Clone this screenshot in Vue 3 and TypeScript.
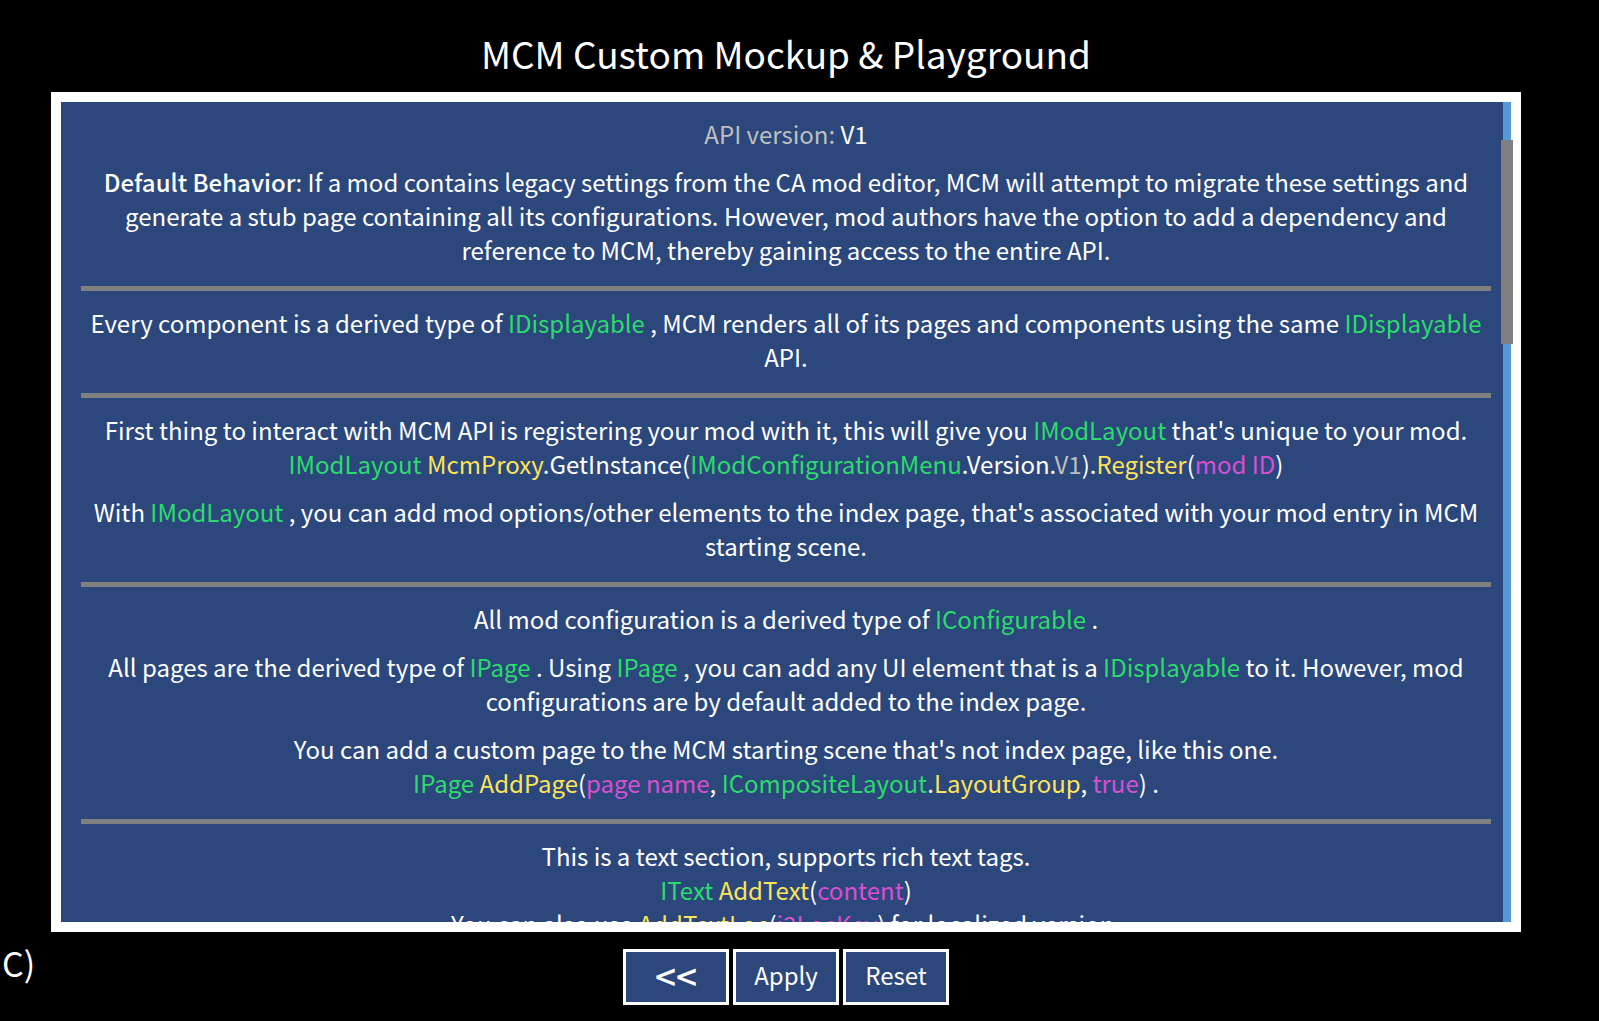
<script setup lang="ts">
import { computed, ref } from 'vue'

type Tone = 'type' | 'member' | 'arg' | 'muted' | 'strong'
type Span = string | [Tone, string]
type Line = Span[]
type Paragraph = Line[]

const sections: Paragraph[][] = [
  [
    [[['muted', 'API version:'], ' V1']],
    [[
      ['strong', 'Default Behavior'],
      ': If a mod contains legacy settings from the CA mod editor, MCM will attempt to migrate these settings and generate a stub page containing all its configurations. However, mod authors have the option to add a dependency and reference to MCM, thereby gaining access to the entire API.',
    ]],
  ],
  [
    [[
      'Every component is a derived type of ', ['type', 'IDisplayable'],
      ' , MCM renders all of its pages and components using the same ', ['type', 'IDisplayable'], ' API.',
    ]],
  ],
  [
    [
      ['First thing to interact with MCM API is registering your mod with it, this will give you ', ['type', 'IModLayout'], " that's unique to your mod."],
      [
        ['type', 'IModLayout'], ' ', ['member', 'McmProxy'], '.GetInstance(', ['type', 'IModConfigurationMenu'],
        '.Version.', ['muted', 'V1'], ').', ['member', 'Register'], '(', ['arg', 'mod ID'], ')',
      ],
    ],
    [[
      'With ', ['type', 'IModLayout'],
      " , you can add mod options/other elements to the index page, that's associated with your mod entry in MCM starting scene.",
    ]],
  ],
  [
    [['All mod configuration is a derived type of ', ['type', 'IConfigurable'], ' .']],
    [[
      'All pages are the derived type of ', ['type', 'IPage'], ' . Using ', ['type', 'IPage'],
      ' , you can add any UI element that is a ', ['type', 'IDisplayable'],
      ' to it. However, mod configurations are by default added to the index page.',
    ]],
    [
      ["You can add a custom page to the MCM starting scene that's not index page, like this one."],
      [
        ['type', 'IPage'], ' ', ['member', 'AddPage'], '(', ['arg', 'page name'], ', ', ['type', 'ICompositeLayout'],
        '.', ['member', 'LayoutGroup'], ', ', ['arg', 'true'], ') .',
      ],
    ],
  ],
  [
    [
      ['This is a text section, supports rich text tags.'],
      [['type', 'IText'], ' ', ['member', 'AddText'], '(', ['arg', 'content'], ')'],
      ['You can also use ', ['member', 'AddTextLoc'], '(', ['arg', 'i2LocKey'], ') for localized version.'],
    ],
  ],
]

const toneOf = (s: Span) => (typeof s === 'string' ? '' : s[0])
const textOf = (s: Span) => (typeof s === 'string' ? s : s[1])

const THUMB_START = 38
const scrolled = ref(0)
const thumbTop = computed(() => `${THUMB_START + Math.round(scrolled.value)}px`)
function onScroll(e: Event) {
  scrolled.value = (e.target as HTMLElement).scrollTop
}
</script>

<template>
  <div class="page">
    <h1 class="title">MCM Custom Mockup &amp; Playground</h1>

    <main class="panel">
      <div class="content" tabindex="0" @scroll="onScroll">
        <section v-for="(section, i) in sections" :key="i" class="section">
          <p v-for="(para, j) in section" :key="j">
            <span v-for="(line, k) in para" :key="k" class="line"><template v-for="(s, n) in line" :key="n"><span v-if="toneOf(s)" :class="toneOf(s)">{{ textOf(s) }}</span><template v-else>{{ textOf(s) }}</template></template></span>
          </p>
        </section>
      </div>
      <div class="track"><div class="thumb" :style="{ top: thumbTop }"></div></div>
    </main>

    <footer class="actions">
      <button type="button" class="back" aria-label="Back">&lt;&lt;</button>
      <button type="button">Apply</button>
      <button type="button">Reset</button>
    </footer>

    <span class="corner">C)</span>
  </div>
</template>

<style>
html,
body {
  background: #000;
}
</style>

<style scoped>
.page {
  position: relative;
  box-sizing: border-box;
  display: flex;
  flex-direction: column;
  height: 100vh;
  padding: 0 78px 16px 51px;
  overflow: hidden;
  background: #000;
  color: #fff;
  font-family: "Noto Sans CJK SC", "Noto Sans", sans-serif;
  font-size: 24px;
  line-height: 34px;
}
.title {
  margin: 0;
  padding: 25px 0 11px;
  font-size: 37px;
  font-weight: 400;
  line-height: 56px;
  text-align: center;
}
.panel {
  flex: 1;
  min-height: 0;
  display: flex;
  border: 10px solid #fff;
  background: #2c477c;
}
.content {
  flex: 1;
  min-width: 0;
  padding: 15px 12px 15px 20px;
  overflow-y: auto;
  scrollbar-width: none;
  outline: none;
  text-align: center;
}
.section + .section {
  margin-top: 19px;
  padding-top: 15px;
  border-top: 5px solid #808080;
}
.section p {
  margin: 0;
}
.section p + p {
  margin-top: 14px;
}
.line {
  display: block;
}
.type {
  color: #2bdc6c;
}
.member {
  color: #fbe45b;
}
.arg {
  color: #d84fd2;
}
.muted {
  color: #bfbfbf;
}
.strong {
  font-weight: 500;
}
.track {
  position: relative;
  flex: none;
  width: 8px;
  background: #5599d5;
}
.thumb {
  position: absolute;
  left: -2px;
  width: 12px;
  height: 204px;
  background: #808080;
}
.actions {
  display: flex;
  justify-content: center;
  gap: 4px;
  padding-top: 17px;
}
.actions button {
  width: 106px;
  height: 56px;
  padding: 0 0 4px;
  border: 3px solid #fff;
  background: #2c477c;
  color: #fff;
  font: inherit;
}
.actions .back {
  font-size: 37px;
  font-weight: 500;
}
.corner {
  position: absolute;
  left: 2px;
  bottom: 34px;
  font-size: 34px;
  line-height: 48px;
}
</style>
